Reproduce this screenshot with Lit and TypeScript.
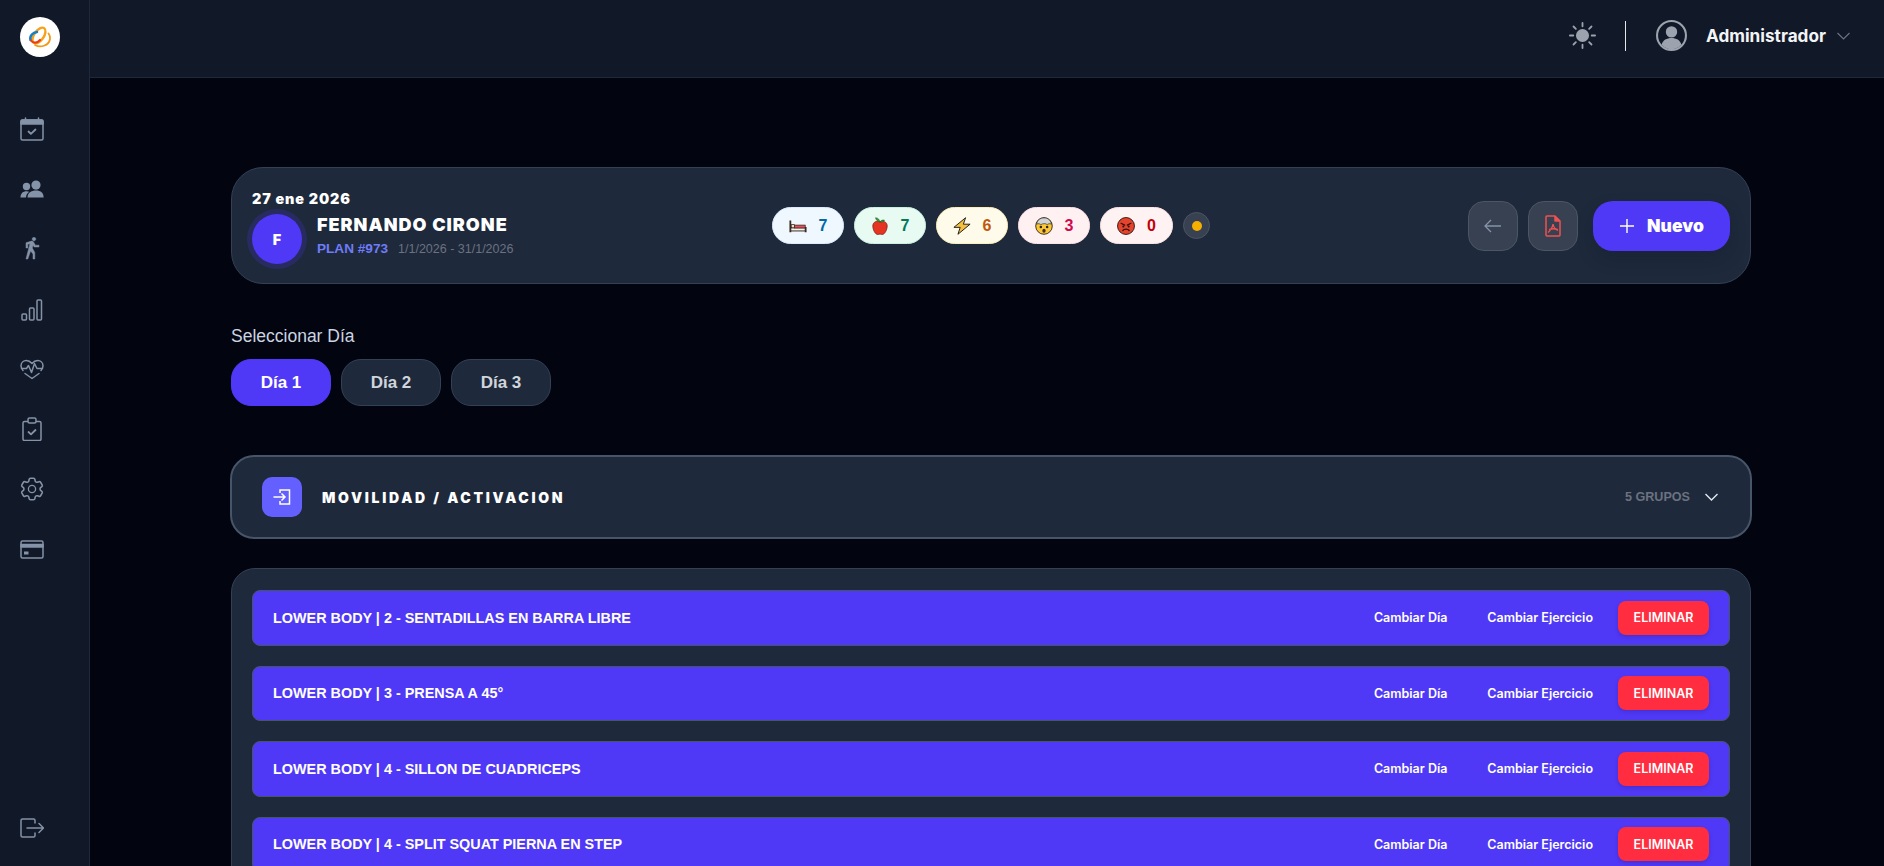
import { LitElement, html, css, svg } from 'lit';
import { customElement, state } from 'lit/decorators.js';

const stroke = (body: unknown, w = 1.5) => html`<svg viewBox="0 0 24 24" fill="none" stroke="currentColor" stroke-width=${w} stroke-linecap="round" stroke-linejoin="round">${body}</svg>`;

const NAV = [
  stroke(svg`<rect x="1" y="3" width="22" height="20" rx="1.5"/><path d="M1 7h22V4.5A1.5 1.5 0 0 0 21.5 3h-19A1.5 1.5 0 0 0 1 4.5z" fill="currentColor"/><path d="M5.5 1v2M18.5 1v2"/><path d="m8.5 14.5 2.4 2.3 4.6-4.3" stroke-width="1.8"/>`),
  html`<svg viewBox="0 0 24 24" fill="currentColor"><g transform="translate(0 1.500)"><circle cx="6.5" cy="8" r="3.7"/><circle cx="16" cy="6.6" r="4.6"/><path d="M0.5 19c0-4.2 2.6-6.2 6-6.2 1 0 1.9.2 2.7.5C7.2 14.800 6.100 16.800 6 19z"/><path d="M7.500 19c0-4.400 3.600-7 8.500-7s7.600 2.600 7.600 7z"/></g></svg>`,
  html`<svg viewBox="0 0 24 24" fill="currentColor" stroke="currentColor" stroke-width=".5"><path d="M14.12 10H19V8.200h-3.620l-2-3.330c-.3-.5-.84-.84-1.460-.84-.18 0-.34.03-.5.08L6 5.800V11h1.800V7.330l2.110-.66L6 22h1.800l2.870-8.110L13 17v5h1.800v-6.410l-2.490-4.540.73-2.870zM14 3.800c1 0 1.800-.8 1.800-1.800S15 .2 14 .2 12.200 1 12.200 2s.8 1.800 1.800 1.800z"/></svg>`,
  stroke(svg`<rect x="2" y="17" width="4.500" height="6" rx="1"/><rect x="9.500" y="11" width="4.500" height="12" rx="1"/><rect x="17" y="3" width="4.500" height="20" rx="1"/>`),
  stroke(svg`<path d="M3 13.500C1.500 11.800 1 10.400 1 8.800 1 5.600 3.500 3.500 6.300 3.500c2.300 0 4 1 5.700 3 1.700-2 3.400-3 5.700-3 2.800 0 5.300 2.100 5.300 5.300 0 1.600-.5 3-2 4.700"/><path d="M1.500 11.500h5l2-3 3 7 3-9 2.500 5h5.500"/><path d="m5 16.500 7 5 7-5"/>`),
  stroke(svg`<path d="M7.500 4.500H4.500A1.500 1.500 0 0 0 3 6v16a1.500 1.500 0 0 0 1.500 1.500h15A1.500 1.500 0 0 0 21 22V6a1.500 1.500 0 0 0-1.500-1.500h-3"/><rect x="8" y="1" width="8" height="5" rx="1.500"/><path d="m8.500 15 2.500 2.300 4.500-4.300" stroke-width="1.800"/>`),
  stroke(svg`<path d="M9.594 3.940c.09-.542.56-.94 1.110-.94h2.593c.55 0 1.020.398 1.110.94l.213 1.281c.063.374.313.686.645.870.074.04.147.083.22.127.325.196.72.257 1.075.124l1.217-.456a1.125 1.125 0 0 1 1.370.49l1.296 2.247a1.125 1.125 0 0 1-.26 1.431l-1.003.827c-.293.241-.438.613-.43.992a7.723 7.723 0 0 1 0 .255c-.008.378.137.75.43.991l1.004.827c.424.35.534.955.26 1.430l-1.298 2.247a1.125 1.125 0 0 1-1.369.491l-1.217-.456c-.355-.133-.75-.072-1.076.124a6.470 6.470 0 0 1-.22.128c-.331.183-.581.495-.644.869l-.213 1.281c-.09.543-.56.94-1.110.94h-2.594c-.55 0-1.019-.398-1.110-.94l-.213-1.281c-.062-.374-.312-.686-.644-.87a6.520 6.520 0 0 1-.22-.127c-.325-.196-.72-.257-1.076-.124l-1.217.456a1.125 1.125 0 0 1-1.369-.49l-1.297-2.247a1.125 1.125 0 0 1 .26-1.431l1.004-.827c.292-.24.437-.613.43-.991a6.932 6.932 0 0 1 0-.255c.007-.38-.138-.751-.43-.992l-1.004-.827a1.125 1.125 0 0 1-.26-1.430l1.297-2.247a1.125 1.125 0 0 1 1.370-.491l1.216.456c.356.133.751.072 1.076-.124.072-.044.146-.086.22-.128.332-.183.582-.495.644-.869l.214-1.280Z" transform="translate(-2.400 -2.400) scale(1.200)"/><circle cx="12" cy="12" r="3.600"/>`, 1.3),
  stroke(svg`<rect x="1" y="4" width="22" height="17" rx="1.500"/><path d="M1 7.500h22v2.500H1z" fill="currentColor"/><rect x="4" y="14.500" width="4.500" height="3" fill="currentColor" stroke="none"/>`),
];

const LOGOUT = stroke(svg`<path d="M15 7V4.500A1.500 1.500 0 0 0 13.500 3h-11A1.500 1.500 0 0 0 1 4.500v15A1.500 1.500 0 0 0 2.500 21h11a1.500 1.500 0 0 0 1.500-1.500V17"/><path d="M7 12h16m-4-4.500 4.500 4.500-4.500 4.500"/>`);

const EMOJI: Record<string, unknown> = {
  bed: html`<svg viewBox="0 0 20 20"><path d="M1.500 4v13M18.500 11v6" stroke="#3a2a20" stroke-width="2" fill="none"/><rect x="2" y="12" width="16" height="3.500" fill="#f5f0e8" stroke="#2b1d16" stroke-width="1"/><rect x="6" y="9" width="12" height="3.200" fill="#e8505b" stroke="#2b1d16" stroke-width=".8"/><rect x="2.500" y="8.500" width="3.500" height="3.500" fill="#f5dcc8" stroke="#2b1d16" stroke-width=".8"/></svg>`,
  apple: html`<svg viewBox="0 0 20 20"><path d="M10 5.500C7 3.700 2 5.200 2 10c0 4.500 3 9.500 5.500 9.500 1 0 1.500-.5 2.500-.5s1.500.5 2.500.5C15 19.500 18 14.500 18 10c0-4.800-5-6.300-8-4.500z" fill="#e53422" stroke="#7a1a10" stroke-width=".8"/><path d="M10 5.500C9.500 3 8 1 5 .8 5.500 3.500 8 5.500 10 5.500zM10 5.500C11 3.500 13 3 15 3.500 14 5.500 12 6 10 5.500z" fill="#3c9a3c" stroke="#1d5a1d" stroke-width=".6"/></svg>`,
  bolt: html`<svg viewBox="0 0 20 20"><path d="M14 .8 1 11.500h7L5.500 19.200 19 8h-7.500z" fill="#f7c03c" stroke="#222" stroke-width="1.100" stroke-linejoin="round"/></svg>`,
  blown: html`<svg viewBox="0 0 20 20"><circle cx="10" cy="10" r="9.200" fill="#fbc737" stroke="#2b2210" stroke-width="1"/><path d="M1.800 8C2.500 3 6 1 10 1s7.500 2 8.200 7c-2-1-3.500-.5-4.700.5-1-1.500-5-1.500-7 0C5.300 7.500 3.800 7 1.800 8z" fill="#cfd3d6" stroke="#2b2210" stroke-width=".7"/><circle cx="6.500" cy="11" r="1.400" fill="#2b2210"/><circle cx="13.500" cy="11" r="1.400" fill="#2b2210"/><ellipse cx="10" cy="15.200" rx="1.800" ry="2.200" fill="#4a2a14"/></svg>`,
  angry: html`<svg viewBox="0 0 20 20"><circle cx="10" cy="10" r="9.400" fill="#e5432e" stroke="#2b120c" stroke-width="1"/><path d="m4.500 7 4 2M15.500 7l-4 2" stroke="#2b120c" stroke-width="1.400" stroke-linecap="round"/><circle cx="7" cy="10.500" r="1.100" fill="#2b120c"/><circle cx="13" cy="10.500" r="1.100" fill="#2b120c"/><path d="M6.500 15c1.500-2 5.500-2 7 0" stroke="#2b120c" stroke-width="1.400" fill="none" stroke-linecap="round"/></svg>`,
};

@customElement('app-root')
export class AppRoot extends LitElement {
  @state() day = 1;

  pills = [
    { icon: 'bed', n: 7, w: 72, bg: '#f0f8ff', bd: '#dbeafe', fg: '#0369a1' },
    { icon: 'apple', n: 7, w: 72, bg: '#e8fbf3', bd: '#c8f0de', fg: '#047857' },
    { icon: 'bolt', n: 6, w: 72, bg: '#fffbeb', bd: '#fdeeb8', fg: '#c2570c' },
    { icon: 'blown', n: 3, w: 72, bg: '#fff1f2', bd: '#ffe0e4', fg: '#d0084f' },
    { icon: 'angry', n: 0, w: 73, bg: '#fef2f2', bd: '#fee2e2', fg: '#c10007' },
  ];

  rows = [
    'LOWER BODY | 2 - SENTADILLAS EN BARRA LIBRE',
    'LOWER BODY | 3 - PRENSA A 45°',
    'LOWER BODY | 4 - SILLON DE CUADRICEPS',
    'LOWER BODY | 4 - SPLIT SQUAT PIERNA EN STEP',
  ];

  static styles = css`
    :host { display: block; height: 100vh; overflow: hidden; background: #020410; font-family: "Liberation Sans", Arial, sans-serif; color: #fff; }
    .shell { display: flex; height: 100%; }
    .side { width: 90px; flex: none; box-sizing: border-box; background: #111827; border-right: 1px solid #1e293b; display: flex; flex-direction: column; padding: 17px 0 26px 20px; color: #8493a8; }
    .logo { width: 40px; height: 40px; border-radius: 50%; background: #fff; display: flex; align-items: center; justify-content: center; margin-bottom: 60px; }
    .logo svg { width: 24px; height: 24px; }
    .nav { display: flex; flex-direction: column; gap: 36px; }
    .nav-i { width: 24px; height: 24px; }
    .nav-i svg { display: block; width: 24px; height: 24px; }
    .spacer { flex: 1; }
    .content { flex: 1; min-width: 0; display: flex; flex-direction: column; }
    .top { height: 71px; flex: none; background: #111827; border-bottom: 1px solid #1e293b; display: flex; align-items: center; justify-content: flex-end; padding: 0 34px 6px 0; color: #9ca3af; }
    .sun { width: 27px; height: 27px; }
    .vline { width: 1px; height: 30px; background: #e5e7eb; margin: 0 30px 0 29px; }
    .user { width: 31px; height: 31px; margin-right: 19px; }
    .uname { font-family: Inter, sans-serif; font-size: 17.200px; font-weight: 700; color: #f3f4f6; }
    .uchev { width: 13px; height: 8px; margin-left: 11px; color: #6b7280; }
    .main { flex: 1; overflow: hidden; padding: 89px 133px 0 141px; }
    .head { box-sizing: border-box; height: 117px; background: #1e293b; border: 1px solid #334155; border-radius: 32px; padding: 9px 20px 0; display: grid; grid-template-columns: 1fr auto 1fr; align-items: center; }
    .date { font-family: Inter, sans-serif; font-size: 14.400px; line-height: 16px; font-weight: 900; letter-spacing: .9px; margin-bottom: 2px; }
    .who { display: flex; align-items: center; gap: 15px; }
    .avatar { width: 50px; height: 50px; margin: 5px 0; border-radius: 50%; background: #4f39f6; box-shadow: 0 0 0 5px rgba(79, 57, 246, .2); display: flex; align-items: center; justify-content: center; font-family: Inter, sans-serif; font-size: 14.400px; font-weight: 900; }
    .info { margin-bottom: 8px; }
    .name { font-family: Inter, sans-serif; font-size: 18px; line-height: 22px; font-weight: 900; letter-spacing: 1px; }
    .plan { display: flex; align-items: baseline; gap: 10px; margin-top: 5px; font-size: 12.500px; color: #6b7280; }
    .plan b { font-size: 13.600px; color: #6f7cf8; }
    .pills { display: flex; align-items: center; gap: 10px; margin-top: -9px; }
    .pill { box-sizing: border-box; height: 37px; border-radius: 19px; border: 1px solid; display: flex; align-items: center; justify-content: center; gap: 12px; font-size: 16px; font-weight: 700; }
    .pill svg { display: block; width: 18px; height: 18px; }
    .dot { width: 27px; height: 27px; border-radius: 50%; background: #374151; border: 1px solid #4b5563; box-sizing: border-box; display: flex; align-items: center; justify-content: center; }
    .dot i { width: 10px; height: 10px; border-radius: 50%; background: #f5b000; }
    .acts { display: flex; justify-content: flex-end; align-items: center; margin-top: -9px; }
    .sq { box-sizing: border-box; width: 50px; height: 50px; border-radius: 16px; background: #374151; border: 1px solid #4b5563; display: flex; align-items: center; justify-content: center; margin-right: 10px; color: #8493a8; }
    .sq svg { width: 20px; height: 20px; }
    .sq.pdf { margin-right: 15px; color: #f05252; }
    .sq.pdf svg { width: 24px; height: 24px; }
    .new { width: 137px; height: 50px; border-radius: 20px; background: #4f39f6; display: flex; align-items: center; justify-content: center; gap: 12px; font-family: Inter, sans-serif; font-size: 17.500px; font-weight: 900; box-shadow: 0 8px 16px rgba(15, 23, 42, .25); }
    .new svg { width: 16px; height: 16px; }
    .lbl { margin-top: 40px; font-size: 17.500px; line-height: 24px; color: #cbd5e1; }
    .days { display: flex; gap: 10px; margin-top: 11px; }
    .daybtn { box-sizing: border-box; width: 100px; height: 47px; border-radius: 20px; background: #1e293b; border: 1px solid #334155; color: #d1d5db; display: flex; align-items: center; justify-content: center; font-size: 17px; font-weight: 700; }
    .daybtn.on { background: #4f39f6; border-color: #4f39f6; color: #fff; }
    .sec { box-sizing: border-box; height: 84px; margin: 49px -1px 0 -1px; background: #1e293b; border: 2px solid #475569; border-radius: 24px; padding: 0 32px 0 30px; display: flex; align-items: center; }
    .sec-i { width: 40px; height: 40px; border-radius: 10px; background: #6360ff; display: flex; align-items: center; justify-content: center; color: #fff; margin-right: 20px; }
    .sec-i svg { width: 20px; height: 20px; }
    .sec-t { flex: 1; font-family: Inter, sans-serif; font-size: 14px; font-weight: 900; letter-spacing: 2.700px; }
    .sec-n { font-size: 12.600px; font-weight: 700; color: #6b7280; margin-right: 15px; }
    .sec-c { width: 13px; height: 8px; color: #e2e8f0; }
    .list { box-sizing: border-box; margin-top: 29px; background: #1e293b; border: 1px solid #334155; border-radius: 24px; padding: 21px 20px; display: flex; flex-direction: column; gap: 20px; }
    .row { box-sizing: border-box; height: 55.500px; flex: none; background: #4f39f6; border: 1px solid #475569; border-radius: 8px; padding: 0 20px; display: flex; align-items: center; }
    .row-t { flex: 1; font-size: 14.400px; font-weight: 700; }
    .link { font-family: Inter, sans-serif; font-size: 12.500px; font-weight: 600; margin-right: 40px; }
    .link.b { margin-right: 25px; }
    .del { width: 91px; height: 34px; border-radius: 8px; background: #ff2d3f; display: flex; align-items: center; justify-content: center; font-family: Inter, sans-serif; font-size: 12.500px; font-weight: 600; box-shadow: 0 2px 4px rgba(0, 0, 0, .15); }
  `;

  render() {
    return html`<div class="shell">
      <aside class="side">
        <div class="logo">
          <svg viewBox="0 0 24 24" fill="none" stroke-linecap="round">
            <ellipse cx="11" cy="10.500" rx="4.800" ry="9" transform="rotate(35 11 10.500)" stroke="#f7a11a" stroke-width="2.400"/>
            <path d="M2.500 15C1.500 10.500 5 7.500 9 7" stroke="#1581c4" stroke-width="2.600"/>
            <path d="M3 15.500c2 3 6 3 9-.5" stroke="#e8401c" stroke-width="2.200"/>
            <path d="M7 20c5 3 14 1 15-6 .3-2-.3-4-1.500-5.500" stroke="#f09a1a" stroke-width="1.800"/>
          </svg>
        </div>
        <nav class="nav">${NAV.map((i) => html`<div class="nav-i">${i}</div>`)}</nav>
        <div class="spacer"></div>
        <div class="nav-i">${LOGOUT}</div>
      </aside>
      <div class="content">
        <header class="top">
          <svg class="sun" viewBox="0 0 24 24" fill="currentColor" stroke="currentColor" stroke-width="1.600" stroke-linecap="round"><circle cx="12" cy="12" r="5.800" stroke="none"/><path d="M12 .8v3M12 20.200v3M.8 12h3M20.200 12h3M4 4l2.100 2.100M17.900 17.900 20 20M4 20l2.100-2.100M17.900 6.100 20 4"/></svg>
          <div class="vline"></div>
          <svg class="user" viewBox="0 0 30 30" fill="currentColor"><circle cx="15" cy="15" r="14" fill="none" stroke="currentColor" stroke-width="2"/><circle cx="15" cy="11.500" r="5.500"/><path d="M5.500 24c1-4.500 5-6.500 9.500-6.500s8.500 2 9.500 6.500A13.500 13.500 0 0 1 15 28.500 13.500 13.500 0 0 1 5.500 24z"/></svg>
          <span class="uname">Administrador</span>
          <svg class="uchev" viewBox="0 0 13 8" fill="none" stroke="currentColor" stroke-width="1.200"><path d="m.5 1 6 6 6-6"/></svg>
        </header>
        <main class="main">
          <section class="head">
            <div>
              <div class="date">27 ene 2026</div>
              <div class="who">
                <div class="avatar">F</div>
                <div class="info">
                  <div class="name">FERNANDO CIRONE</div>
                  <div class="plan"><b>PLAN #973</b><span>1/1/2026 - 31/1/2026</span></div>
                </div>
              </div>
            </div>
            <div class="pills">
              ${this.pills.map((p) => html`<div class="pill" style="width:${p.w}px;background:${p.bg};border-color:${p.bd};color:${p.fg}">${EMOJI[p.icon]}<span>${p.n}</span></div>`)}
              <div class="dot"><i></i></div>
            </div>
            <div class="acts">
              <div class="sq"><svg viewBox="0 0 20 20" fill="none" stroke="currentColor" stroke-width="1.300"><path d="M18 10H2m6-6-6 6 6 6"/></svg></div>
              <div class="sq pdf"><svg viewBox="0 0 24 24" fill="none" stroke="currentColor" stroke-width="1.500" stroke-linejoin="round"><path d="M6 2h8l5 5v14a1 1 0 0 1-1 1H6a1 1 0 0 1-1-1V3a1 1 0 0 1 1-1z"/><path d="M14 2v5h5" fill="currentColor"/><path d="M12 10c-.5 3-2 6-5 8.500M12 10c.5 3 2.500 5.500 5 6.500M8 15.500c3-1 6-1 9 0" stroke-width="1.300"/></svg></div>
              <div class="new"><svg viewBox="0 0 16 16" stroke="#fff" stroke-width="1.400"><path d="M8 1v14M1 8h14"/></svg>Nuevo</div>
            </div>
          </section>
          <div class="lbl">Seleccionar Día</div>
          <div class="days">
            ${[1, 2, 3].map((d) => html`<div class="daybtn ${d === this.day ? 'on' : ''}">Día ${d}</div>`)}
          </div>
          <section class="sec">
            <div class="sec-i"><svg viewBox="0 0 20 20" fill="none" stroke="currentColor" stroke-width="1.500"><path d="M8 6V3h9.500v14H8v-3"/><path d="M1.500 10H13M9.500 6.500 13 10l-3.500 3.500"/></svg></div>
            <div class="sec-t">MOVILIDAD / ACTIVACION</div>
            <span class="sec-n">5 GRUPOS</span>
            <svg class="sec-c" viewBox="0 0 13 8" fill="none" stroke="currentColor" stroke-width="1.400"><path d="m.5 1 6 6 6-6"/></svg>
          </section>
          <section class="list">
            ${this.rows.map((r) => html`<div class="row">
              <div class="row-t">${r}</div>
              <span class="link">Cambiar Día</span>
              <span class="link b">Cambiar Ejercicio</span>
              <div class="del">ELIMINAR</div>
            </div>`)}
          </section>
        </main>
      </div>
    </div>`;
  }
}
